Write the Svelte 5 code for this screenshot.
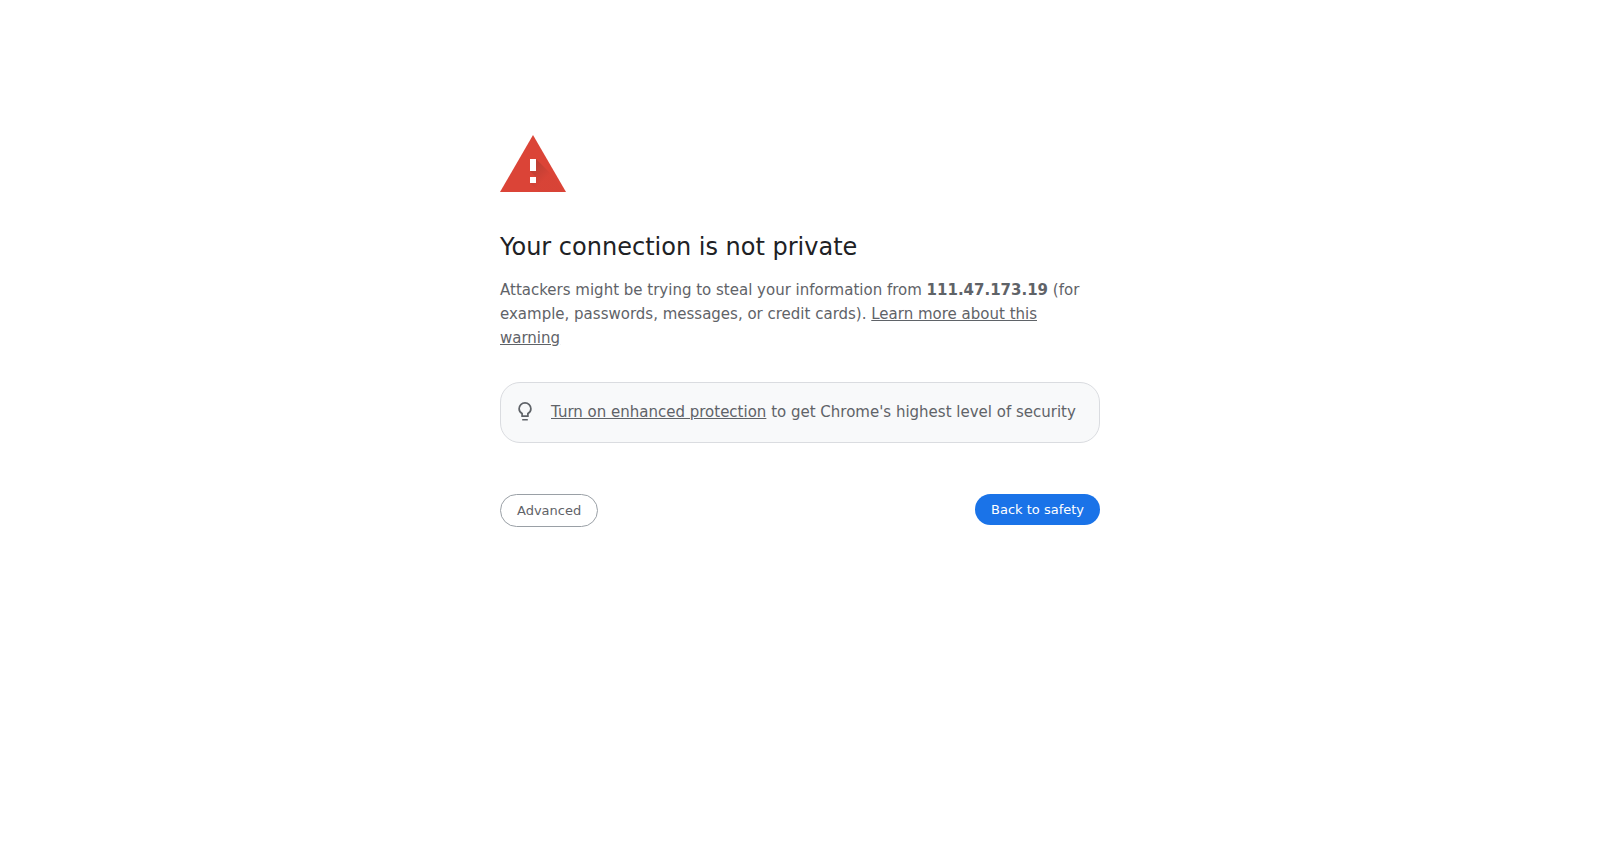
<script lang="ts">
  interface Props {
    host?: string;
  }

  let { host = '111.47.173.19' }: Props = $props();
</script>

<svelte:head>
  <title>Privacy error</title>
</svelte:head>

<main class="interstitial">
  <svg class="warning-icon" viewBox="0 0 72 72" aria-hidden="true">
    <defs>
      <linearGradient id="shadow" gradientUnits="userSpaceOnUse" x1="30" y1="46" x2="44" y2="60">
        <stop offset="0" stop-color="#3e2723" stop-opacity="0.22" />
        <stop offset="1" stop-color="#3e2723" stop-opacity="0.02" />
      </linearGradient>
    </defs>
    <path d="M0 72h66L33 15z" fill="#db4437" />
    <path d="M36 39 55 58 63 72H39L30 63 36 57 30 51z" fill="url(#shadow)" />
    <path d="M30 39h6v12h-6zM30 57h6v6h-6z" fill="#fff" />
  </svg>

  <h1>Your connection is not private</h1>
  <p>
    Attackers might be trying to steal your information from <strong>{host}</strong> (for example,
    passwords, messages, or credit cards). <a href="#learn-more">Learn more about this warning</a>
  </p>

  <div class="promo">
    <svg class="bulb" viewBox="0 0 24 24" aria-hidden="true">
      <path
        d="M9.100 16.200v-2.800C7.300 12.400 6.100 10.700 6.100 8.700a5.900 5.900 0 0 1 11.800 0c0 2-1.200 3.700-3 4.700v2.800z"
        fill="none"
        stroke="currentColor"
        stroke-width="1.700"
      />
      <path d="M9.200 19h5.600v1.500H9.200z" fill="currentColor" />
    </svg>
    <span><a href="#enhanced-protection">Turn on enhanced protection</a> to get Chrome's highest level of security</span>
  </div>

  <div class="actions">
    <button type="button" class="secondary">Advanced</button>
    <button type="button" class="primary">Back to safety</button>
  </div>
</main>

<style>
  :global(body) {
    background: #fff;
    color: #5f6368;
    font-family: 'DejaVu Sans', sans-serif;
    font-size: 15px;
  }

  .interstitial {
    box-sizing: border-box;
    max-width: 600px;
    margin: 14vh auto 0;
    line-height: 24px;
  }

  .warning-icon {
    display: block;
    width: 72px;
    height: 72px;
    margin-bottom: 41px;
  }

  h1 {
    margin: 0 0 16px;
    color: #202124;
    font-size: 24px;
    font-weight: 400;
    line-height: 29px;
  }

  p {
    margin: 0;
  }

  a {
    color: #5f6368;
    text-decoration: underline;
  }

  .promo {
    display: flex;
    align-items: flex-start;
    gap: 14px;
    margin-top: 32px;
    padding: 17px 12px 18px;
    border: 1px solid #dadce0;
    border-radius: 20px;
    background: #f8f9fa;
  }

  .bulb {
    flex: none;
    width: 24px;
    height: 24px;
  }

  .actions {
    display: flex;
    align-items: flex-start;
    justify-content: space-between;
    margin-top: 51px;
  }

  button {
    padding: 8px 16px;
    border: 0;
    border-radius: 20px;
    font: 13px/15px 'DejaVu Sans', sans-serif;
    cursor: pointer;
  }

  .primary {
    background: #1a73e8;
    color: #fff;
  }

  .secondary {
    border: 1px solid #9aa0a6;
    background: #fff;
    color: #5f6368;
  }

  button:focus-visible {
    outline: 2px solid #1a73e8;
    outline-offset: 2px;
  }

  @media (max-width: 640px) {
    .interstitial {
      margin-top: 7vh;
      padding: 0 24px;
    }
  }
</style>
